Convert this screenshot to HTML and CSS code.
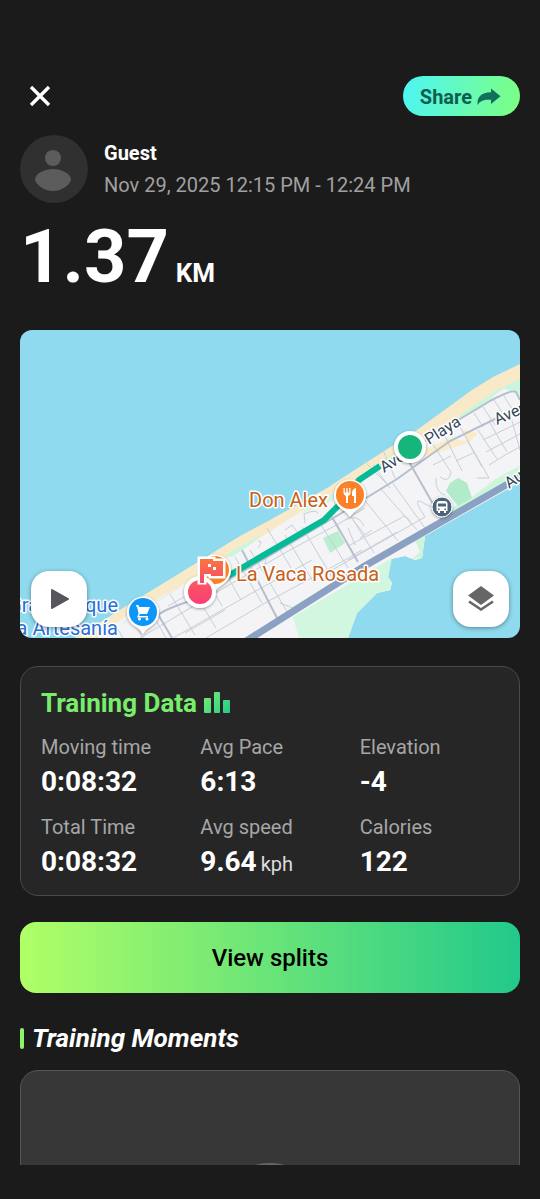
FILE: index.html
```html
<!DOCTYPE html>
<html lang="en">
<head>
    <meta charset="UTF-8">
    <meta name="viewport" content="width=device-width, initial-scale=1">
    <title>Training summary</title>
    <link rel="stylesheet" href="styles.css">
</head>
<body>
    <main class="screen">
        <header class="topbar">
            <button class="close" aria-label="Close">
                <svg width="22" height="22" viewBox="0 0 22 22"><path d="M2 2L20 20M20 2L2 20" stroke="#fff" stroke-width="3.4"/></svg>
            </button>
            <button class="share">
                Share
                <svg width="24" height="18" viewBox="0 0 24 18"><path d="M0.5 17C0 9 4 4.5 14 4.3V0.5L23.5 8.2L14 16V11.8C7 11.3 3.5 12.5 0.5 17Z" fill="#12705a"/></svg>
            </button>
        </header>

        <section class="user">
            <svg class="avatar" viewBox="0 0 68 68">
                <circle cx="34" cy="34" r="34" fill="#303030"/>
                <circle cx="33" cy="23" r="8" fill="#5c5c5c"/>
                <path d="M15 45C15 38 25 34 33 34S51 38 51 45C49 51 41 56 33 56S17 51 15 45Z" fill="#5c5c5c"/>
            </svg>
            <div class="user-info">
                <div class="name">Guest</div>
                <div class="date">Nov 29, 2025 12:15 PM - 12:24 PM</div>
            </div>
        </section>

        <h1 class="distance"><span>1.37</span><span class="unit">KM</span></h1>

        <section class="map">
            <svg class="map-canvas" viewBox="20 330 500 308" preserveAspectRatio="xMidYMid slice">
                <defs>
                    <linearGradient id="flagFill" x1="0" y1="0" x2="0" y2="1">
                        <stop offset="0" stop-color="#f9773d"/>
                        <stop offset="1" stop-color="#f7496a"/>
                    </linearGradient>
                    <linearGradient id="endFill" x1="0" y1="0" x2="0" y2="1">
                        <stop offset="0" stop-color="#fb5d60"/>
                        <stop offset="1" stop-color="#fb3a78"/>
                    </linearGradient>
                    <filter id="shadow" x="-30%" y="-30%" width="160%" height="170%">
                        <feDropShadow dx="0" dy="1" stdDeviation="1.5" flood-opacity="0.4"/>
                    </filter>
                </defs>

                <!-- sea, beach, land -->
                <rect x="20" y="330" width="500" height="308" fill="#8fdaee"/>
                <path d="M520 364L493 377L472 390L417 430L350 473L327 488L270 520L240 536L180 573L123 608L75 638H348L357 613L377 593L390 590L392 583L388 577L391 559L405 556L415 560L422 558L425 536L520 482Z" fill="#f8e9c9"/>
                <path d="M520 380L495 394L470 410L425 438L380 464L345 486L300 512L255 541L190 581L123 618L98 638H348L357 613L377 593L390 590L392 583L388 577L391 559L405 556L415 560L422 558L425 536L520 482Z" fill="#f4f3f5"/>
                <path d="M520 379L497 390L463 413L455 421L478 410L503 388L520 395Z" fill="#c9f6dc"/>
                <path d="M226 555L262 534L255 541L232 557Z" fill="#c9f6dc"/>
                <path d="M380 462L400 450L405 455L390 466Z" fill="#c9f6dc"/>
                <path d="M300 514L330 502L345 488L320 499Z" fill="#d6f5e1"/>
                <path d="M410 440L425 450L450 438L470 442L440 452L420 457ZM463 430L478 433L468 444Z" fill="#faecc9"/>
                <path d="M293 617L392 558L388 577L392 583L390 590L377 593L357 613L348 638H299Z" fill="#d2f7e1"/>
                <path d="M443 518L507 482L520 477V466L497 478L472 497L448 510Z" fill="#cdf5dc"/>
                <path d="M446 491L450 483L458 478L467 483L472 498L458 506Z" fill="#b2ebc9"/>
                <path d="M323 538L338 531L345 543L330 553Z" fill="#b9efcf"/>
                <path d="M415 540L425 536L422 558L412 559L420 552Z" fill="#cdf5dc"/>

                <!-- side streets -->
                <g fill="none" stroke="#c6cfd8" stroke-width="1">
                    <path d="M140 638L222 589L290 550L340 523L365 508M173 638L245 597L312 560M206 638L265 603L345 560L362 550M168 606L200 588M185 633L225 610"/>
                    <path d="M116 626L123 638M131 617L143 638M148 606L166 638M170 594L195 635M190 585L216 628M205 577L222 606M222 567L241 600M235 557L262 603M250 550L288 613M267 528L300 583M285 535L314 583M302 527L332 577M318 520L348 568M345 507L374 553M362 497L398 541M380 488L417 530M392 482L425 528M373 465L390 488"/>
                    <path d="M258 548Q264 540 258 541M285 530L292 525L298 533L294 538M305 523L304 514Q315 509 318 513M268 553L264 567M345 520Q358 513 364 526M350 545L401 518Q406 512 411 524M360 538L372 530M425 517Q410 494 425 504L438 510M445 495Q435 492 436 478"/>
                    <path d="M363 460L387 484M383 450L395 478M430 440L451 472Q449 484 440 477M442 430L462 471M456 420L489 478L477 478M467 440L482 467M478 430L497 459M490 423L507 452M474 413L483 427M483 407L495 425M494 400L507 420M504 396L517 417M433 465L451 456M456 461L475 452M483 440L520 422M486 452L520 434M489 465L505 455L520 447M509 410L520 450"/>
                    <path d="M332 570L425 517M348 560L397 532M355 545L348 528M365 535L353 520M280 603L293 608"/>
                </g>

                <!-- avenues -->
                <g fill="none" stroke="#b5bfcd" stroke-width="2">
                    <path d="M425 441L460 419L490 401Q512 389 516 392L520 400"/>
                    <path d="M172 638L159 616Q157 612 190 601L223 583L340 514L397 479L450 441L493 420L520 408"/>
                    <path d="M408 460L441 518M332 517L358 562M242 550L277 618"/>
                </g>
                <path d="M293 607L345 578L430 532" fill="none" stroke="#d2f7e1" stroke-width="2"/>
                <path d="M243 643L363 567L443 521L520 477" fill="none" stroke="#8ba1c3" stroke-width="7"/>
                <path d="M180 587L123 623" fill="none" stroke="#e3e6eb" stroke-width="1"/>

                <!-- recorded route -->
                <path d="M200 590L233 573L324 520L344 500L359 480L380 466" fill="none" stroke="#05ba97" stroke-width="6"/>
                <path d="M380 466L405 452" fill="none" stroke="#a4e8cd" stroke-width="3" stroke-dasharray="2 2"/>

                <g class="street-label">
                    <text transform="translate(384 473) rotate(-32)">Ave</text>
                    <text transform="translate(429 445) rotate(-32)">Playa</text>
                    <text transform="translate(497 425) rotate(-24)">Aven</text>
                    <text transform="translate(509 489) rotate(-34)">Aut</text>
                </g>
                <g class="place-label">
                    <text x="249" y="507">Don Alex</text>
                    <text x="236" y="581">La Vaca Rosada</text>
                </g>
                <g class="shop-label">
                    <text x="118" y="612" text-anchor="end">Gran Parque</text>
                    <text x="118" y="635" text-anchor="end">la Artesanía</text>
                </g>

                <!-- bus stop -->
                <g transform="translate(442 507)">
                    <circle r="10" fill="#4d6379" stroke="#fff" stroke-width="1" filter="url(#shadow)"/>
                    <path d="M-5.5 -3Q-5.5 -6 -2.5 -6H2.5Q5.5 -6 5.5 -3V4H4V6H2V4H-2V6H-4V4H-5.5ZM-4 -3.5V-0.5H4V-3.5ZM-4 1.5V3H-2.5V1.5ZM2.5 1.5V3H4V1.5Z" fill="#fff" fill-rule="evenodd"/>
                </g>

                <!-- shop pin -->
                <g transform="translate(143 612)">
                    <path d="M0 22C-3 17 -7 15 -11 12A16 16 0 1 1 11 12C7 15 3 17 0 22Z" fill="#fff" filter="url(#shadow)"/>
                    <circle r="14" fill="#0b96f8"/>
                    <path d="M-7 -7H-4.5L-3.8 -5H7L4 2H-3L-4 4H5V5.5H-6L-4.5 1.5L-6 -5.5H-7Z" fill="#fff"/>
                    <circle cx="-3.5" cy="7" r="1.5" fill="#fff"/>
                    <circle cx="4" cy="7" r="1.5" fill="#fff"/>
                </g>

                <!-- restaurant pins -->
                <g transform="translate(350 495)">
                    <path d="M0 22C-3 17 -7 15 -11 12A16 16 0 1 1 11 12C7 15 3 17 0 22Z" fill="#fff" filter="url(#shadow)"/>
                    <circle r="14" fill="#fb8128"/>
                    <path d="M-6.5 -7V-2Q-6.5 0 -4 1V8H-2V1Q0.5 0 0.5 -2V-7H-0.8V-2.5H-2.3V-7H-3.7V-2.5H-5.2V-7ZM6 -7Q2 -6 2 -2V1H4V8H6Z" fill="#fff"/>
                </g>
                <g transform="translate(215 570)">
                    <path d="M0 22C-3 17 -7 15 -11 12A16 16 0 1 1 11 12C7 15 3 17 0 22Z" fill="#fff" filter="url(#shadow)"/>
                    <circle r="14" fill="#fb8128"/>
                </g>

                <!-- finish and start -->
                <circle cx="200" cy="592" r="14" fill="url(#endFill)" stroke="#fff" stroke-width="4" filter="url(#shadow)"/>
                <path d="M200 582V559H213V561H223V576H211V574H204V582Z" fill="none" stroke="#fff" stroke-width="5"/>
                <path d="M200 583V559H213V561H223V576H211V574H204V583Z" fill="url(#flagFill)"/>
                <path d="M208 564H211V567H208ZM213 567H216V570H213Z" fill="#fff"/>
                <circle cx="410" cy="447" r="14" fill="#17b67a" stroke="#fff" stroke-width="4" filter="url(#shadow)"/>
            </svg>
            <button class="map-btn play" aria-label="Play route">
                <svg width="20" height="22" viewBox="0 0 20 22"><path d="M3 2L19 11L3 20Z" fill="#56565c" stroke="#56565c" stroke-width="2" stroke-linejoin="round"/></svg>
            </button>
            <button class="map-btn layers" aria-label="Map layers">
                <svg width="26" height="26" viewBox="0 0 26 26"><path d="M13 0L26 9.5L13 19L0 9.5Z" fill="#666"/><path d="M1 15.5L13 23.5L25 15.5" fill="none" stroke="#666" stroke-width="2.6"/></svg>
            </button>
        </section>

        <section class="card">
            <h2 class="card-title">
                <span>Training Data</span>
                <svg width="26" height="22" viewBox="0 0 26 22">
                    <defs>
                        <linearGradient id="bars" x1="0" y1="0" x2="26" y2="22" gradientUnits="userSpaceOnUse">
                            <stop offset="0" stop-color="#7bef72"/>
                            <stop offset="1" stop-color="#22ca89"/>
                        </linearGradient>
                    </defs>
                    <path d="M1 6H6Q7 6 7 7V20Q7 21 6 21H1Q0 21 0 20V7Q0 6 1 6ZM11 0H15Q16 0 16 1V20Q16 21 15 21H11Q10 21 10 20V1Q10 0 11 0ZM20 8H25Q26 8 26 9V20Q26 21 25 21H20Q19 21 19 20V9Q19 8 20 8Z" fill="url(#bars)"/>
                </svg>
            </h2>
            <dl class="stats">
                <div><dt>Moving time</dt><dd>0:08:32</dd></div>
                <div><dt>Avg Pace</dt><dd>6:13</dd></div>
                <div><dt>Elevation</dt><dd>-4</dd></div>
                <div><dt>Total Time</dt><dd>0:08:32</dd></div>
                <div><dt>Avg speed</dt><dd><span>9.64</span><small>kph</small></dd></div>
                <div><dt>Calories</dt><dd>122</dd></div>
            </dl>
        </section>

        <button class="splits">View splits</button>

        <h2 class="section-title">Training Moments</h2>
        <section class="moments">
            <div class="add-moment"></div>
        </section>
    </main>
</body>
</html>
```

FILE: styles.css
```css
* {
    box-sizing: border-box;
}
body {
    height: 100vh;
    margin: 0;
    padding-bottom: 34px; /* system navigation area */
    background-color: #1b1b1b;
    color: #fff;
    font-family: Roboto, "Liberation Sans", sans-serif;
}
button {
    border: none;
    padding: 0;
    font-family: inherit;
    cursor: pointer;
}
h1, h2, dl, dd {
    margin: 0;
}
svg {
    display: block;
}
.screen {
    height: 100%;
    overflow: hidden;
    padding: 76px 20px 0;
}
.topbar {
    display: flex;
    justify-content: space-between;
    align-items: center;
}
.close {
    padding: 9px;
    background: none;
}
.share {
    display: flex;
    align-items: center;
    gap: 5px;
    height: 40px;
    padding: 1px 19px 0 17px;
    border-radius: 20px;
    background: linear-gradient(100deg, #4df5f5, #7dff80);
    color: #0d5d50;
    font-size: 20px;
    font-weight: bold;
}
.user {
    display: flex;
    align-items: center;
    gap: 16px;
    margin-top: 19px;
}
.avatar {
    width: 68px;
    height: 68px;
}
.name {
    font-size: 20px;
    line-height: 32px;
    font-weight: bold;
}
.date {
    color: #a0a0a0;
    font-size: 20px;
    line-height: 32px;
}
.distance {
    display: flex;
    align-items: baseline;
    gap: 7px;
    margin-top: 9px;
    font-size: 74px;
    line-height: 90px;
}
.unit {
    font-size: 26px;
    line-height: 32px;
}
.map {
    position: relative;
    height: 308px;
    margin-top: 28px;
    border-radius: 12px;
    overflow: hidden;
}
.map-canvas {
    width: 100%;
    height: 100%;
}
.map-canvas text {
    stroke: #fff;
    stroke-width: 3px;
    stroke-linejoin: round;
    paint-order: stroke;
}
.street-label {
    fill: #34465a;
    font-size: 16px;
}
.place-label {
    fill: #c8601a;
    font-size: 20px;
}
.shop-label {
    fill: #2a6fd6;
    font-size: 20px;
}
.map-btn {
    position: absolute;
    bottom: 11px;
    display: flex;
    justify-content: center;
    align-items: center;
    width: 56px;
    height: 56px;
    border-radius: 18px;
    background-color: #fff;
    box-shadow: 0 1px 4px rgba(0, 0, 0, 0.4);
}
.play {
    left: 11px;
}
.layers {
    right: 11px;
}
.card {
    margin-top: 28px;
    padding: 20px 0 14px 20px;
    border: 1px solid #4a4a4e;
    border-radius: 18px;
    background-color: #262626;
}
.card-title {
    display: flex;
    align-items: center;
    gap: 7px;
    font-size: 26px;
    line-height: 32px;
}
.card-title span {
    color: #7aec6c;
}
.stats {
    display: grid;
    grid-template-columns: repeat(3, 1fr);
    margin-top: 12px;
    row-gap: 10px;
}
.stats dt {
    color: #a6a6a6;
    font-size: 20px;
    line-height: 32px;
}
.stats dd {
    display: flex;
    align-items: baseline;
    gap: 4px;
    font-size: 28px;
    line-height: 38px;
    font-weight: bold;
}
.stats small {
    color: #ddd;
    font-size: 20px;
    line-height: 32px;
    font-weight: normal;
}
.splits {
    width: 100%;
    height: 71px;
    margin-top: 26px;
    border-radius: 16px;
    background: linear-gradient(90deg, #b0ff66, #22c98b);
    font-size: 24px;
    font-weight: 500;
}
.section-title {
    display: flex;
    align-items: center;
    gap: 8px;
    margin-top: 29px;
    font-size: 26px;
    line-height: 32px;
    font-style: italic;
}
.section-title::before {
    content: "";
    width: 4px;
    height: 21px;
    border-radius: 2px;
    background-color: #8ef56a;
}
.moments {
    height: 240px;
    margin-top: 16px;
    padding-top: 92px;
    border: 1px solid #555558;
    border-radius: 18px;
    background-color: #373737;
}
.add-moment {
    width: 112px;
    height: 112px;
    margin: 0 auto;
    border: 2px solid #666;
    border-radius: 50%;
}
```
